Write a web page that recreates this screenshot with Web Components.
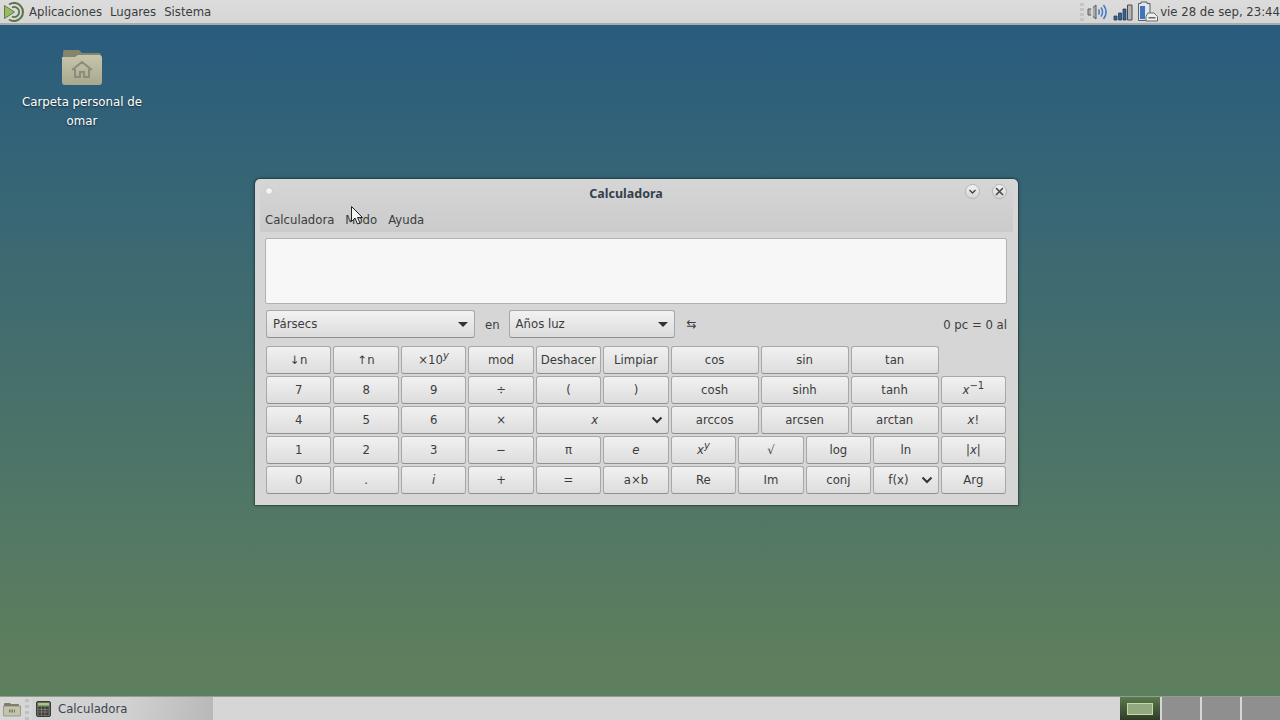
<!DOCTYPE html>
<html lang="es">
<head>
<meta charset="utf-8">
<title>Calculadora</title>
<style>
    html, body{
        margin: 0;
        height: 100%;
        overflow: hidden;
    }
    body{
        font-family: "DejaVu Sans", sans-serif;
        font-size: 11.7px;
    }
    i{
        font-style: italic;
    }
</style>
</head>
<body>
<gnome-screen>
    <top-panel slot="top"></top-panel>
    <desktop-icon slot="desktop" style="left: 17px; top: 20px;">Carpeta personal de omar</desktop-icon>
    <calc-window slot="desktop" style="left: 255px; top: 154px;"></calc-window>
    <mouse-cursor slot="desktop" style="left: 351px; top: 181px;"></mouse-cursor>
    <bottom-panel slot="bottom"></bottom-panel>
</gnome-screen>

<script>
function define(name, css, html){
    const template = document.createElement('template');
    template.innerHTML = `<style>${css}</style>${html}`;
    customElements.define(name, class extends HTMLElement{
        constructor(){
            super();
            this.attachShadow({mode: 'open'})
                .appendChild(template.content.cloneNode(true));
        }
    });
}

define('gnome-screen', `
    :host{
        width: 1280px;
        height: 720px;
        display: flex;
        flex-direction: column;
        background: linear-gradient(#275b7f 0, #5e7f5d 92%);
    }
    .desktop{
        flex: 1;
        position: relative;
    }
`, `
    <slot name="top"></slot>
    <div class="desktop"><slot name="desktop"></slot></div>
    <slot name="bottom"></slot>
`);

define('top-panel', `
    :host{
        height: 25px;
        box-sizing: border-box;
        display: flex;
        align-items: center;
        background: linear-gradient(#dcdcdc, #d6d6d6);
        border-bottom: 2px solid #a9aca9;
        color: #3c3c3c;
    }
    .logo{
        margin: 0 3px 0 3px;
        display: block;
    }
    .menu{
        display: flex;
        gap: 8px;
    }
    .tray{
        margin-left: auto;
        display: flex;
        align-items: center;
    }
    .grip{
        width: 4px;
        height: 18px;
        margin-right: 3px;
        background: repeating-linear-gradient(#c4c4c4 0 3px, transparent 3px 5px);
    }
    svg{
        display: block;
    }
    .clock{
        white-space: nowrap;
    }
`, `
    <svg class="logo" width="23" height="22" viewBox="0 0 23 22">
        <path d="M6 3.500A9 9 0 1 1 6 18.500" fill="none" stroke="#5b7345" stroke-width="2"/>
        <path d="M9 6.500a5 5 0 1 1 0 9" fill="none" stroke="#5b7345" stroke-width="1.800"/>
        <path d="M1.500 4.500v13l10-6.500z" fill="#97bb62" stroke="#5f7f3d" stroke-linejoin="round"/>
    </svg>
    <div class="menu"><span>Aplicaciones</span><span>Lugares</span><span>Sistema</span></div>
    <div class="tray">
        <div class="grip"></div>
        <svg width="21" height="20" viewBox="0 0 21 20" style="margin-right:5px">
            <path d="M1 7h3l5-4v14l-5-4H1z" fill="#a8a8a8" stroke="#5c5c5c"/>
            <path d="M5 5v10" stroke="#e4e4e4" stroke-width="1.500"/>
            <path d="M11.500 7.500c1 1.600 1 3.400 0 5M14 5.500c2 2.800 2 6.200 0 9M16.500 3c3.200 4.300 3.200 9.700 0 14" fill="none" stroke="#3f78c0" stroke-width="1.500"/>
        </svg>
        <svg width="20" height="18" viewBox="0 0 20 18" style="margin-right:4px">
            <path d="M1 13h3v4H1zM5.500 10h3v7h-3zM10 6h3v11h-3z" fill="#2f659f" stroke="#2b3a4d" stroke-width=".8"/>
            <path d="M14.500 2H19v15h-4.500z" fill="#b4b4b4" stroke="#4a4a4a"/>
        </svg>
        <svg width="22" height="24" viewBox="0 0 22 24" style="margin-right:1px">
            <path d="M4 2h6v1.500h3v17H1.500v-17H4z" fill="#e0e6ee" stroke="#5a5f66"/>
            <path d="M3 6h5v13H3z" fill="#3f74b8"/>
            <path d="M11 13h6l3.500 3.500V21H9v-4.500z" fill="#efefef" stroke="#6a6a6a"/>
            <path d="M11.500 17h7v1.500h-7z" fill="#666"/>
        </svg>
        <span class="clock">vie 28 de sep, 23:44</span>
    </div>
`);

define('desktop-icon', `
    :host{
        position: absolute;
        width: 130px;
        display: flex;
        flex-direction: column;
        align-items: center;
        gap: 4px;
        color: #fff;
        text-align: center;
        line-height: 19px;
        font-size: 11.8px;
        text-shadow: 0 1px 2px rgba(0, 0, 0, 0.6);
    }
    svg{
        display: block;
    }
`, `
    <svg width="44" height="44" viewBox="0 0 44 44">
        <path d="M3 7a2 2 0 0 1 2-2h14l3 3h17a2 2 0 0 1 2 2v8H3z" fill="#85846f"/>
        <path d="M2 12h13l3-2h21a3 3 0 0 1 3 3v24a3 3 0 0 1-3 3H5a3 3 0 0 1-3-3z" fill="url(#f)"/>
        <path d="M12 25l10-8 10 8M15 24v8h5v-5h4v5h5v-8" fill="none" stroke="#8d8c78" stroke-width="2"/>
        <defs>
            <linearGradient id="f" x1="0" y1="0" x2="0" y2="1">
                <stop offset="0" stop-color="#c7c6ad"/>
                <stop offset="1" stop-color="#a9a88f"/>
            </linearGradient>
        </defs>
    </svg>
    <div><slot></slot></div>
`);

define('round-button', `
    :host{
        width: 15px;
        height: 15px;
        box-sizing: border-box;
        display: flex;
        align-items: center;
        justify-content: center;
        border-radius: 50%;
        border: 1px solid #b4b4b4;
        background: linear-gradient(#f2f2f2, #d6d6d6);
    }
`, `<slot></slot>`);

define('calc-window', `
    :host{
        position: absolute;
        width: 763px;
        height: 326px;
        box-sizing: border-box;
        display: flex;
        flex-direction: column;
        background: #d6d6d6;
        border-radius: 5px 5px 0 0;
        box-shadow: 0 0 1px 1px rgba(0, 0, 0, 0.25), 0 0 4px rgba(0, 0, 0, 0.3);
        color: #3c3c3c;
    }
    .head{
        height: 53px;
        margin: 0 5px;
        flex-shrink: 0;
        display: flex;
        flex-direction: column;
        background: linear-gradient(#d6d6d6, #cbcbcb);
    }
    .title{
        height: 28px;
        flex-shrink: 0;
        display: flex;
        align-items: center;
    }
    .title b{
        flex: 1;
        text-align: center;
        margin-left: 15px;
        font-family: "Noto Sans", sans-serif;
        font-size: 12.5px;
        color: #35414b;
    }
    .dot{
        width: 6px;
        height: 6px;
        margin: -4px 0 0 6px;
        border-radius: 50%;
        background: #f4f4f4;
        box-shadow: 0 0 1px #999;
    }
    .controls{
        display: flex;
        gap: 12px;
        margin: -4px 6px 0 0;
    }
    .menu{
        display: flex;
        gap: 11px;
        padding: 6px 0 0 5px;
    }
    .body{
        flex: 1;
        padding: 6px 11px 0 10px;
        display: flex;
        flex-direction: column;
    }
    .display{
        height: 66px;
        box-sizing: border-box;
        background: #f7f7f7;
        border: 1px solid #b2b2b2;
        border-radius: 2px;
        flex-shrink: 0;
    }
    .convert{
        display: flex;
        align-items: center;
        height: 28px;
        margin-top: 6px;
        flex-shrink: 0;
    }
    .en{
        margin: 1px 9px 0 10px;
    }
    .swap{
        margin-left: 12px;
        font-size: 12px;
    }
    .result{
        margin: 1px 0 0 auto;
    }
    calc-keypad{
        margin-top: 8px;
    }
`, `
    <div class="head">
        <div class="title">
            <div class="dot"></div>
            <b>Calculadora</b>
            <div class="controls">
                <round-button><svg width="9" height="9" viewBox="0 0 9 9"><path d="M1.500 3l3 3 3-3" fill="none" stroke="#444" stroke-width="1.300"/></svg></round-button>
                <round-button><svg width="9" height="9" viewBox="0 0 9 9"><path d="M1 1l7 7M8 1l-7 7" fill="none" stroke="#444" stroke-width="1.500"/></svg></round-button>
            </div>
        </div>
        <div class="menu"><span>Calculadora</span><span>Modo</span><span>Ayuda</span></div>
    </div>
    <div class="body">
        <div class="display"></div>
        <div class="convert">
            <unit-combo style="width: 209px; margin-left: 1px;">Pársecs</unit-combo>
            <span class="en">en</span>
            <unit-combo style="width: 166px;">Años luz</unit-combo>
            <span class="swap">⇆</span>
            <span class="result">0 pc = 0 al</span>
        </div>
        <calc-keypad></calc-keypad>
    </div>
`);

define('unit-combo', `
    :host{
        height: 28px;
        box-sizing: border-box;
        display: flex;
        align-items: center;
        justify-content: space-between;
        padding: 0 6px 0 6px;
        border: 1px solid #a8a8a8;
        border-bottom-color: #909090;
        border-radius: 3px;
        background: linear-gradient(#f2f2f2, #dcdcdc);
    }
    .arrow{
        width: 0;
        height: 0;
        border: 5px solid transparent;
        border-top: 5px solid #333;
        border-bottom: 0;
    }
`, `<span><slot></slot></span><span class="arrow"></span>`);

define('calc-key', `
    :host{
        height: 28px;
        box-sizing: border-box;
        display: flex;
        align-items: center;
        justify-content: center;
        padding-bottom: 1px;
        position: relative;
        border: 1px solid #a8a8a8;
        border-bottom-color: #909090;
        border-radius: 3px;
        background: linear-gradient(#f1f1f1, #dddddd);
        color: #3c3c3c;
        white-space: nowrap;
    }
    :host([drop]){
        padding-right: 15px;
    }
    svg{
        position: absolute;
        right: 5px;
        top: 8px;
        display: none;
    }
    :host([drop]) svg{
        display: block;
    }
    ::slotted(sup){
        font-size: 10px;
        line-height: 0;
        vertical-align: 5px;
    }
`, `
    <span><slot></slot></span>
    <svg width="12" height="10" viewBox="0 0 12 10"><path d="M1.500 2.500L6 7l4.500-4.500" fill="none" stroke="#333" stroke-width="2"/></svg>
`);

define('calc-keypad', `
    :host{
        display: grid;
        grid-template-columns: repeat(6, 65.45px) repeat(12, 20.5px) 65.45px;
        grid-auto-rows: 28px;
        gap: 2px;
        width: 740px;
        margin-left: 1px;
    }
    ::slotted([w="4"]){
        grid-column: span 4;
    }
    ::slotted([w="3"]){
        grid-column: span 3;
    }
    ::slotted([w="2"]){
        grid-column: span 2;
    }
`, `<slot></slot>`);

define('mouse-cursor', `
    :host{
        position: absolute;
        width: 13px;
        height: 19px;
    }
    svg{
        display: block;
    }
`, `
    <svg width="13" height="19" viewBox="0 0 13 19">
        <path d="M.5.5v15l3.500-3.500 2.500 6 2.500-1-2.500-5.500h5z" fill="#f4f4f4" stroke="#222"/>
    </svg>
`);

define('bottom-panel', `
    :host{
        height: 23px;
        display: flex;
        align-items: stretch;
        background: #d6d6d6;
        border-top: 1px solid #8f9f8c;
        color: #3c4450;
    }
    .folder{
        margin: 2px 3px 0 2px;
        display: block;
    }
    .grip{
        width: 4px;
        margin: 2px 3px 0 0;
        background: repeating-linear-gradient(#c0c0c0 0 3px, transparent 3px 6px);
    }
    .task{
        width: 181px;
        padding-left: 4px;
        box-sizing: border-box;
        display: flex;
        align-items: center;
        gap: 7px;
        background: linear-gradient(100deg, #d2d2d2 50%, #b8b8b8 100%);
    }
    .pager{
        margin-left: auto;
        display: flex;
    }
    .ws{
        width: 38px;
        margin-left: 2px;
        background: #8f8f8f;
    }
    .ws.on{
        width: 40px;
        margin-left: 0;
        display: flex;
        align-items: center;
        justify-content: center;
        background: linear-gradient(#5c7a50, #2f3a27);
    }
    .ws.on div{
        width: 24px;
        height: 10px;
        border: 1px solid #c3dc9e;
        background: #94a880;
    }
    svg{
        display: block;
    }
`, `
    <svg class="folder" width="20" height="20" viewBox="0 0 20 20">
        <path d="M2 5a1 1 0 0 1 1-1h5l1 1h7a1 1 0 0 1 1 1v2H2z" fill="#7f7e6a"/>
        <path d="M1.500 7h17v9a1 1 0 0 1-1 1h-15a1 1 0 0 1-1-1z" fill="#c5c4ab" stroke="#77766a" stroke-width=".6"/>
        <path d="M7 12h6" stroke="#77766a" stroke-width="3" stroke-dasharray="1.500 1"/>
    </svg>
    <div class="grip"></div>
    <div class="task">
        <svg width="15" height="16" viewBox="0 0 15 16">
            <rect x=".5" y=".5" width="14" height="15" rx="1.500" fill="#6a6a62" stroke="#3a3a36"/>
            <rect x="2" y="2" width="11" height="2.500" fill="#9fce7a"/>
            <path d="M2.500 6h10v8h-10z" fill="#3d3d38"/>
            <path d="M5.500 6v8M9 6v8M2.500 8.500h10M2.500 11h10" stroke="#85857d" stroke-width=".8"/>
        </svg>
        <span>Calculadora</span>
    </div>
    <div class="pager">
        <div class="ws on"><div></div></div>
        <div class="ws"></div><div class="ws"></div><div class="ws"></div>
    </div>
`);

// filas del teclado, w es lo que ocupa cada tecla en la rejilla
const keys = [
    ['↓n'], ['↑n'], ['×10<sup><i>y</i></sup>'], ['mod'], ['Deshacer'], ['Limpiar'],
    ['cos', 4], ['sin', 4], ['tan', 4], null,
    ['7'], ['8'], ['9'], ['÷'], ['('], [')'],
    ['cosh', 4], ['sinh', 4], ['tanh', 4], ['<i>x</i><sup>−1</sup>'],
    ['4'], ['5'], ['6'], ['×'], ['<i>x</i>', 2, true],
    ['arccos', 4], ['arcsen', 4], ['arctan', 4], ['<i>x</i>!'],
    ['1'], ['2'], ['3'], ['−'], ['π'], ['<i>e</i>'],
    ['<i>x</i><sup><i>y</i></sup>', 3], ['√', 3], ['log', 3], ['ln', 3], ['|<i>x</i>|'],
    ['0'], ['.'], ['<i>i</i>'], ['+'], ['='], ['a×b'],
    ['Re', 3], ['Im', 3], ['conj', 3], ['f(x)', 3, true], ['Arg'],
];

// teclas como hijos con slot del teclado
const pad = document.querySelector('calc-window').shadowRoot.querySelector('calc-keypad');
keys.forEach(k => {
    if (!k){
        pad.appendChild(document.createElement('div'));
        return;
    }
    const key = document.createElement('calc-key');
    key.innerHTML = k[0];
    if (k[1]) key.setAttribute('w', k[1]);
    if (k[2]) key.setAttribute('drop', '');
    pad.appendChild(key);
});
</script>
</body>
</html>
